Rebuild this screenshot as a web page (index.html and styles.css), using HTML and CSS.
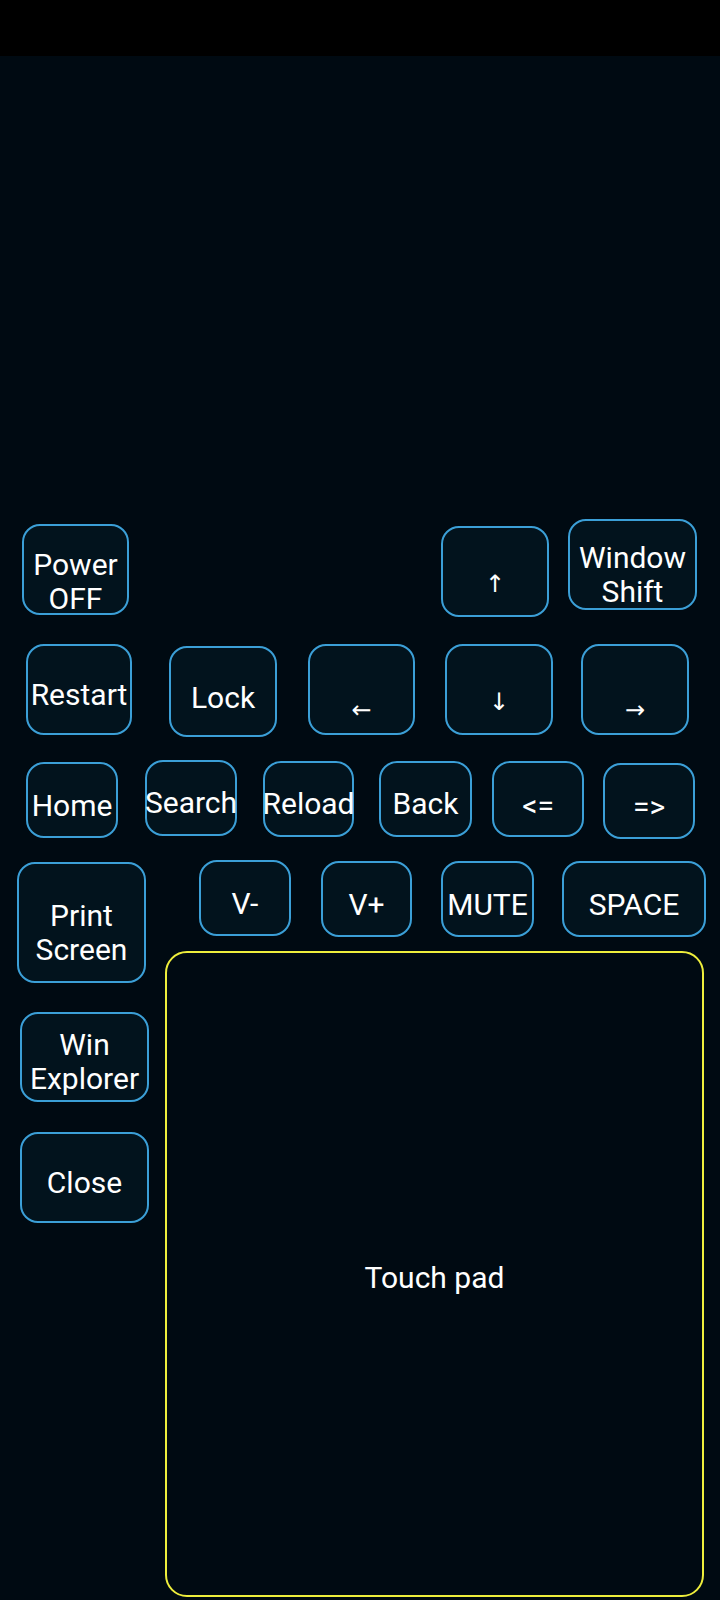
FILE: index.html
```html
<!DOCTYPE html>
<html>
<head>
<meta charset="utf-8">
<link rel="stylesheet" href="styles.css">
</head>
<body>
<div class="statusbar"></div>
<main class="pad-area">
  <div class="row row1">
    <div class="key k-power"><span>Power</span><span>OFF</span></div>
    <div class="key k-up arrow"><span>↑</span></div>
    <div class="key k-window"><span>Window</span><span>Shift</span></div>
  </div>
  <div class="row row2">
    <div class="key k-restart"><span>Restart</span></div>
    <div class="key k-lock"><span>Lock</span></div>
    <div class="key k-left arrow harrow"><span>←</span></div>
    <div class="key k-down arrow"><span>↓</span></div>
    <div class="key k-right arrow harrow"><span>→</span></div>
  </div>
  <div class="row row3">
    <div class="key small k-home"><span>Home</span></div>
    <div class="key small k-search"><span>Search</span></div>
    <div class="key small k-reload"><span>Reload</span></div>
    <div class="key small k-back"><span>Back</span></div>
    <div class="key small k-prev"><span>&lt;=</span></div>
    <div class="key small k-next"><span>=&gt;</span></div>
  </div>
  <div class="bottom">
    <div class="leftcol">
      <div class="key wide k-print"><span>Print</span><span>Screen</span></div>
      <div class="key wide k-explorer"><span>Win</span><span>Explorer</span></div>
      <div class="key wide k-close"><span>Close</span></div>
    </div>
    <div class="rightcol">
      <div class="row row4">
        <div class="key small k-vminus"><span>V-</span></div>
        <div class="key small k-vplus"><span>V+</span></div>
        <div class="key small k-mute"><span>MUTE</span></div>
        <div class="key small k-space"><span>SPACE</span></div>
      </div>
      <div class="touchpad"><span>Touch pad</span></div>
    </div>
  </div>
</main>
</body>
</html>
```
FILE: styles.css
```css
* { box-sizing: border-box; }
html, body {
  margin: 0;
  padding: 0;
  background: #000a12;
  width: 720px;
  height: 1600px;
  overflow: hidden;
  font-family: Roboto, "Noto Sans", "DejaVu Sans", sans-serif;
  color: #ffffff;
}
.statusbar {
  height: 56px;
  background: #000000;
}
.pad-area {
  padding-top: 463px;
}
.row {
  display: flex;
  align-items: flex-start;
}
.key {
  flex: none;
  display: flex;
  flex-direction: column;
  align-items: center;
  justify-content: flex-start;
  width: 108px;
  height: 91px;
  border: 2px solid #3b9fd7;
  border-radius: 18px;
  background: #02131d;
  font-size: 30px;
  line-height: 34px;
  white-space: nowrap;
}
.key.small { width: 92px; height: 76px; }
.key.wide { width: 129px; }

/* row 1 */
.row1 { height: 125px; }
.key.k-power { width: 107px; margin-left: 22px; margin-top: 5px; padding-top: 22px; }
.key.k-up { margin-left: 312px; margin-top: 7px; }
.key.k-window { width: 129px; margin-left: 19px; padding-top: 20px; }

/* row 2 */
.row2 { height: 116px; }
.key.k-restart { width: 106px; margin-left: 26px; padding-top: 32px; }
.key.k-lock { margin-left: 37px; margin-top: 2px; padding-top: 33px; }
.key.k-left { width: 107px; margin-left: 31px; }
.key.k-down { margin-left: 30px; }
.key.k-right { margin-left: 28px; }

.key.arrow { padding-top: 39px; font-size: 24px; }
.key.harrow { padding-top: 47px; }

/* row 3 */
.row3 { height: 100px; }
.key.k-home { margin-left: 26px; margin-top: 2px; padding-top: 25px; }
.key.k-search { margin-left: 27px; padding-top: 24px; }
.key.k-reload { width: 91px; margin-left: 26px; margin-top: 1px; padding-top: 24px; }
.key.k-back { width: 93px; margin-left: 25px; margin-top: 1px; padding-top: 24px; }
.key.k-prev { margin-left: 20px; margin-top: 1px; padding-top: 26px; }
.key.k-next { margin-left: 19px; margin-top: 3px; padding-top: 25px; }

/* bottom */
.bottom { display: flex; align-items: flex-start; }
.leftcol {
  flex: none;
  width: 165px;
  display: flex;
  flex-direction: column;
  align-items: flex-start;
}
.key.k-print { height: 121px; margin-left: 17px; margin-top: 2px; padding-top: 35px; }
.key.k-explorer { height: 90px; margin-left: 20px; margin-top: 29px; padding-top: 14px; }
.key.k-close { margin-left: 20px; margin-top: 30px; padding-top: 32px; }

.rightcol { flex: none; width: 541px; }
.row4 { height: 77px; }
.key.k-vminus { margin-left: 34px; padding-top: 25px; }
.key.k-vplus { width: 91px; margin-left: 30px; margin-top: 1px; padding-top: 25px; }
.key.k-mute { width: 93px; margin-left: 29px; margin-top: 1px; padding-top: 25px; }
.key.k-space { width: 144px; margin-left: 28px; margin-top: 1px; padding-top: 25px; }

.touchpad {
  width: 539px;
  height: 646px;
  margin-top: 14px;
  border: 2px solid #eeee3c;
  border-radius: 22px;
  display: flex;
  align-items: center;
  justify-content: center;
  font-size: 30px;
  line-height: 34px;
  padding-top: 8px;
}
```
